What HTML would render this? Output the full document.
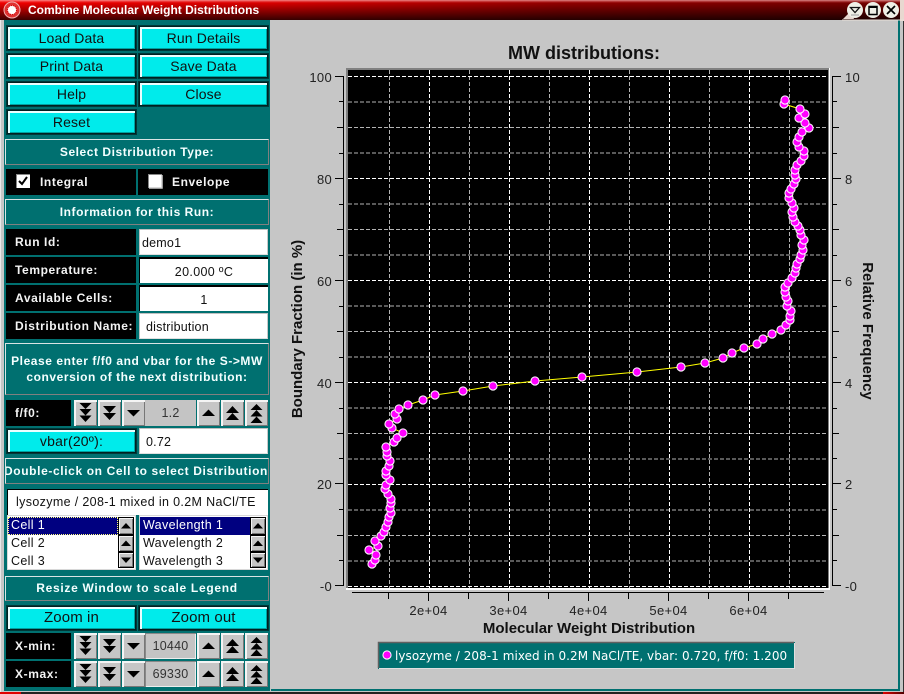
<!DOCTYPE html>
<html><head><meta charset="utf-8"><style>
*{box-sizing:border-box}
html,body{margin:0;padding:0;width:904px;height:694px;overflow:hidden;background:#c6c6c6;font-family:"Liberation Sans",sans-serif}
.a{position:absolute}
.b{position:absolute;width:129px;height:24px;background:#00ebeb;border:1px solid #002020;outline:1px solid #003838;box-shadow:inset 2px 2px 0 #eaffff,inset -1px -1px 0 #00a0a0;font-size:14px;letter-spacing:.12px;color:#111;text-align:center;line-height:22px}
.l{position:absolute;left:5px;width:264px;background:#007070;border:1px solid;border-color:#d8e4e4 #808080 #808080 #d8e4e4;color:#f4ffff;font-weight:bold;font-size:12px;letter-spacing:.55px;text-align:center;white-space:nowrap;overflow:hidden}
.k{position:absolute;background:#000;color:#f4f4f4;font-weight:bold;font-size:12px;letter-spacing:.6px;height:26px;line-height:26px;padding-left:9px;white-space:nowrap}
.w{position:absolute;left:139px;width:129px;height:26px;background:#fff;font-size:12.5px;color:#111;line-height:26px;letter-spacing:.2px;white-space:nowrap}
.w1{border:1px solid #c8c8c8;border-color:#c0c0c0 #c8c8c8 #e0e0e0 #c0c0c0}
.w2{border-top:2px solid #000;border-left:1px solid #000;text-align:center;letter-spacing:.35px}
.s{position:absolute;width:23px;height:26px;background:#c6c6c6;box-shadow:inset 2px 2px 0 #f4f4f4,inset -1px -1px 0 #777}
.s svg{position:absolute;left:0;top:0}
.f{position:absolute;left:145px;width:51px;height:26px;background:#c4c4c4;font-size:12.5px;color:#333;text-align:center;line-height:26px;letter-spacing:.2px}
.f2{box-shadow:inset 1px 1px 0 #888,inset -1px -1px 0 #eee}
.li{position:absolute;width:129px;height:55px;background:#fff;border:1px solid #d8d8d8;font-size:12.5px;color:#111;letter-spacing:.35px}
.li div{position:absolute;left:0;height:18px;line-height:17px;padding-left:3px;white-space:nowrap}
.li .sb{position:absolute;left:110px;width:16px;padding:0;background:#c6c6c6;border:1px solid #000;box-shadow:inset 1px 1px 0 #f4f4f4,inset -1px -1px 0 #777}
.sb svg{position:absolute;left:0;top:0}
</style></head><body>
<svg width="0" height="0" style="position:absolute"><defs>
<symbol id="d1" viewBox="0 0 23 26"><path d="M5 10h13l-6.500 6.500z" fill="#000"/></symbol>
<symbol id="d2" viewBox="0 0 23 26"><path d="M5 6h13l-6.500 7zM5 13h13l-6.500 7z" fill="#000"/></symbol>
<symbol id="d3" viewBox="0 0 23 26"><path d="M5.500 3h12l-6 6zM5.500 9h12l-6 6.500zM5.500 15.500h12l-6 6.500z" fill="#000"/></symbol>
<symbol id="u1" viewBox="0 0 23 26"><path d="M5 16h13l-6.500-6.500z" fill="#000"/></symbol>
<symbol id="u2" viewBox="0 0 23 26"><path d="M5 13h13l-6.500-7zM5 20h13l-6.500-7z" fill="#000"/></symbol>
<symbol id="u3" viewBox="0 0 23 26"><path d="M5.500 10h12l-6-6zM5.500 16.500h12l-6-6.500zM5.500 23h12l-6-6.500z" fill="#000"/></symbol>
</defs></svg>

<!-- outer frame -->
<div class="a" style="left:0;top:0;width:1px;height:694px;background:#e8e8e8"></div>
<div class="a" style="left:898px;top:20px;width:2px;height:671px;background:#007070"></div>
<div class="a" style="left:271px;top:689px;width:629px;height:2px;background:#007070"></div>
<div class="a" style="left:903px;top:20px;width:1px;height:674px;background:#333"></div>
<div class="a" style="left:0;top:692px;width:904px;height:2px;background:#222"></div>
<div class="a" style="left:0;top:692px;width:21px;height:2px;background:#e00000"></div>
<div class="a" style="left:883px;top:692px;width:21px;height:2px;background:linear-gradient(90deg,#e00000,#500000)"></div>

<!-- title bar -->
<div class="a" style="left:0;top:0;width:904px;height:20px;background:linear-gradient(180deg,rgba(255,190,190,.7) 0,rgba(255,120,120,.25) 2px,rgba(0,0,0,0) 3px,rgba(0,0,0,.75) 100%),linear-gradient(90deg,#f00000,#d80000 30%,#900000 62%,#700000)"></div>
<svg class="a" style="left:0;top:0" width="24" height="20"><circle cx="12" cy="10" r="8" fill="#e03030" stroke="#f0b0b0"/><circle cx="12" cy="10" r="4.500" fill="#fff" stroke="#c00" stroke-dasharray="1 1"/></svg>
<div class="a" style="left:28px;top:2px;color:#fff;font-weight:bold;font-size:12px;line-height:16px;white-space:nowrap">Combine Molecular Weight Distributions</div>
<svg class="a" style="left:838px;top:0" width="66" height="21">
<path d="M5 19L13 11L16 19zM62 0h4v21h-4z" fill="#e8d8d0"/>
<path d="M4 20h62" stroke="#e8e0d8" stroke-width="1"/>
<circle cx="17" cy="10" r="8" fill="#efefe6"/><circle cx="35" cy="10" r="8" fill="#efefe6"/><circle cx="53" cy="10" r="8" fill="#efefe6"/>
<path d="M12.500 7.500h9l-4.500 5z" fill="none" stroke="#111" stroke-width="1.300"/><path d="M13 15h8" stroke="#999"/>
<rect x="31" y="6.500" width="8" height="8" fill="none" stroke="#000" stroke-width="1.500"/><path d="M31 7h8" stroke="#000" stroke-width="2"/>
<path d="M49 6l8 8M57 6l-8 8" stroke="#000" stroke-width="1.700"/>
</svg>

<!-- left panel -->
<div class="a" style="left:4px;top:20px;width:266px;height:671px;background:#007070"></div>

<div class="b" style="left:7px;top:26px">Load Data</div>
<div class="b" style="left:139px;top:26px">Run Details</div>
<div class="b" style="left:7px;top:54px">Print Data</div>
<div class="b" style="left:139px;top:54px">Save Data</div>
<div class="b" style="left:7px;top:82px">Help</div>
<div class="b" style="left:139px;top:82px">Close</div>
<div class="b" style="left:7px;top:110px">Reset</div>

<div class="l" style="top:139px;height:26px;line-height:24px">Select Distribution Type:</div>
<div class="k" style="left:6px;top:169px;width:130px"></div>
<div class="k" style="left:138px;top:169px;width:130px"></div>
<div class="a" style="left:40px;top:169px;color:#f4f4f4;font-weight:bold;font-size:12px;letter-spacing:.6px;line-height:26px">Integral</div>
<div class="a" style="left:172px;top:169px;color:#f4f4f4;font-weight:bold;font-size:12px;letter-spacing:.6px;line-height:26px">Envelope</div>
<svg class="a" style="left:16px;top:174px" width="15" height="15"><rect width="14" height="14" fill="#fff"/><path d="M0 14V0h14" fill="none" stroke="#888" stroke-width="2"/><path d="M3 7l3 3 5-7" fill="none" stroke="#000" stroke-width="2"/></svg>
<svg class="a" style="left:148px;top:174px" width="15" height="15"><rect width="14" height="14" fill="#fff"/><path d="M0 14V0h14" fill="none" stroke="#888" stroke-width="2"/><path d="M14 1v13H1" fill="none" stroke="#ccc" stroke-width="1.500"/></svg>

<div class="l" style="top:199px;height:26px;line-height:24px">Information for this Run:</div>
<div class="k" style="left:6px;top:229px;width:130px">Run Id:</div>
<div class="w w1" style="top:229px;padding-left:2px">demo1</div>
<div class="k" style="left:6px;top:257px;width:130px">Temperature:</div>
<div class="w w2" style="top:257px">20.000 ºC</div>
<div class="k" style="left:6px;top:285px;width:130px">Available Cells:</div>
<div class="w w2" style="top:285px">1</div>
<div class="k" style="left:6px;top:313px;width:130px">Distribution Name:</div>
<div class="w w1" style="top:313px;padding-left:6px">distribution</div>

<div class="l" style="top:343px;height:52px;line-height:16px;padding-top:9px">Please enter f/f0 and vbar for the S-&gt;MW<br>conversion of the next distribution:</div>

<div class="k" style="left:6px;top:400px;width:65px">f/f0:</div>
<div class="s" style="left:74px;top:400px"><svg width="23" height="26"><use href="#d3"/></svg></div>
<div class="s" style="left:98px;top:400px"><svg width="23" height="26"><use href="#d2"/></svg></div>
<div class="s" style="left:122px;top:400px"><svg width="23" height="26"><use href="#d1"/></svg></div>
<div class="f" style="top:400px">1.2</div>
<div class="s" style="left:197px;top:400px"><svg width="23" height="26"><use href="#u1"/></svg></div>
<div class="s" style="left:221px;top:400px"><svg width="23" height="26"><use href="#u2"/></svg></div>
<div class="s" style="left:245px;top:400px"><svg width="23" height="26"><use href="#u3"/></svg></div>

<div class="b" style="left:7px;top:429px;letter-spacing:.2px">vbar(20º):</div>
<div class="w w1" style="top:428px;padding-left:6px">0.72</div>

<div class="l" style="top:458px;height:26px;line-height:24px;text-indent:-1px"><span style="display:inline-block;margin:0 -10px;letter-spacing:.62px">Double-click on Cell to select Distribution</span></div>

<div class="a" style="left:7px;top:489px;width:261px;height:26px;background:#fff;border-top:1px solid #000;border-left:1px solid #000;font-size:12.5px;color:#111;line-height:25px;padding-left:8px;letter-spacing:.35px;white-space:nowrap">lysozyme / 208-1 mixed in 0.2M NaCl/TE</div>

<div class="li" style="left:7px;top:515px">
<div style="top:1px;width:110px;background:#000080;color:#fff;outline:1px dotted #ffff80;outline-offset:-1px">Cell 1</div>
<div style="top:19px">Cell 2</div><div style="top:37px">Cell 3</div>
<div class="sb" style="top:1px;height:18px"><svg width="14" height="16" viewBox="0 0 14 16"><path d="M2 10.500h10l-5-5.500z" fill="#000"/></svg></div>
<div class="sb" style="top:19px;height:17px"><svg width="14" height="15" viewBox="0 0 14 15"><path d="M2 10h10l-5-5.500z" fill="#000"/></svg></div>
<div class="sb" style="top:36px;height:16px"><svg width="14" height="14" viewBox="0 0 14 14"><path d="M2 4.500h10l-5 5.500z" fill="#000"/></svg></div>
</div>
<div class="li" style="left:139px;top:515px">
<div style="top:1px;width:110px;background:#000080;color:#fff">Wavelength 1</div>
<div style="top:19px">Wavelength 2</div><div style="top:37px">Wavelength 3</div>
<div class="sb" style="top:1px;height:18px"><svg width="14" height="16" viewBox="0 0 14 16"><path d="M2 10.500h10l-5-5.500z" fill="#000"/></svg></div>
<div class="sb" style="top:19px;height:17px"><svg width="14" height="15" viewBox="0 0 14 15"><path d="M2 10h10l-5-5.500z" fill="#000"/></svg></div>
<div class="sb" style="top:36px;height:16px"><svg width="14" height="14" viewBox="0 0 14 14"><path d="M2 4.500h10l-5 5.500z" fill="#000"/></svg></div>
</div>

<div class="l" style="top:576px;height:25px;line-height:23px;letter-spacing:.7px">Resize Window to scale Legend</div>

<div class="b" style="left:7px;top:606px;font-size:15px;letter-spacing:.1px">Zoom in</div>
<div class="b" style="left:139px;top:606px;font-size:15px;letter-spacing:.1px">Zoom out</div>

<div class="k" style="left:6px;top:633px;width:65px;height:26px">X-min:</div>
<div class="s" style="left:74px;top:633px"><svg width="23" height="26"><use href="#d3"/></svg></div>
<div class="s" style="left:98px;top:633px"><svg width="23" height="26"><use href="#d2"/></svg></div>
<div class="s" style="left:122px;top:633px"><svg width="23" height="26"><use href="#d1"/></svg></div>
<div class="f f2" style="top:633px">10440</div>
<div class="s" style="left:197px;top:633px"><svg width="23" height="26"><use href="#u1"/></svg></div>
<div class="s" style="left:221px;top:633px"><svg width="23" height="26"><use href="#u2"/></svg></div>
<div class="s" style="left:245px;top:633px"><svg width="23" height="26"><use href="#u3"/></svg></div>

<div class="k" style="left:6px;top:661px;width:65px;height:26px">X-max:</div>
<div class="s" style="left:74px;top:661px"><svg width="23" height="26"><use href="#d3"/></svg></div>
<div class="s" style="left:98px;top:661px"><svg width="23" height="26"><use href="#d2"/></svg></div>
<div class="s" style="left:122px;top:661px"><svg width="23" height="26"><use href="#d1"/></svg></div>
<div class="f f2" style="top:661px">69330</div>
<div class="s" style="left:197px;top:661px"><svg width="23" height="26"><use href="#u1"/></svg></div>
<div class="s" style="left:221px;top:661px"><svg width="23" height="26"><use href="#u2"/></svg></div>
<div class="s" style="left:245px;top:661px"><svg width="23" height="26"><use href="#u3"/></svg></div>

<!-- plot -->
<svg class="a" style="left:0;top:0" width="904" height="694" font-family="'Liberation Sans',sans-serif">
<rect x="346" y="68" width="484" height="522" fill="#fff"/>
<rect x="346" y="68" width="483" height="520" fill="#808080"/>
<rect x="348" y="70" width="480" height="518" fill="#000"/>
<g fill="none" stroke-dasharray="4 2" stroke="#b4b4b4">
<path d="M348 102h480M348 127.500h480M348 153h480M348 204h480M348 229.500h480M348 255h480M348 306h480M348 331.500h480M348 357h480M348 408h480M348 433.500h480M348 459h480M348 510h480M348 535.500h480M348 561h480"/>
<path d="M389.500 70v518M469.500 70v518M549.500 70v518M629.500 70v518M709.500 70v518M789.500 70v518"/>
<g stroke="#fff"><path d="M348 76.500h480M348 178.500h480M348 280.500h480M348 382.500h480M348 484.500h480M348 586.500h480"/>
<path d="M429.500 70v518M509.500 70v518M589.500 70v518M669.500 70v518M749.500 70v518"/></g>
</g>
<polyline fill="none" stroke="#ffff00" points="372,564 375,560 376,555 369,550 378,546 375,541 381,536 384,532 386,527 388,522 389,517 391,513 390,508 391,503 391,499 388,494 385,489 386,485 390,480 386,475 386,471 389,466 390,461 387,456 387,452 386,447 394,442 397,438 403,433 392,428 389,424 397,419 395,414 399,409 408,405 423,400 435,395 463,391 493,386 535,381 582,377 637,372 681,367 705,363 723,358 732,353 744,348 757,344 763,339 772,334 781,330 786,325 790,320 790,316 791,311 787,306 788,301 786,297 785,292 785,287 788,283 792,278 795,273 796,268 797,264 800,259 801,255 803,250 802,245 804,240 801,235 800,230 798,226 795,222 793,217 792,212 794,208 792,203 789,198 789,193 791,189 794,184 796,179 795,175 795,170 797,165 801,161 804,156 804,151 799,147 797,142 799,137 802,132 809,128 805,123 799,118 805,114 800,109 784,104 785,100"/>
<g fill="#ff00ff" stroke="#fff">
<circle cx="372" cy="564" r="4.100"/><circle cx="375" cy="560" r="4.100"/><circle cx="376" cy="555" r="4.100"/><circle cx="369" cy="550" r="4.100"/><circle cx="378" cy="546" r="4.100"/><circle cx="375" cy="541" r="4.100"/><circle cx="381" cy="536" r="4.100"/><circle cx="384" cy="532" r="4.100"/><circle cx="386" cy="527" r="4.100"/><circle cx="388" cy="522" r="4.100"/><circle cx="389" cy="517" r="4.100"/><circle cx="391" cy="513" r="4.100"/><circle cx="390" cy="508" r="4.100"/><circle cx="391" cy="503" r="4.100"/><circle cx="391" cy="499" r="4.100"/><circle cx="388" cy="494" r="4.100"/><circle cx="385" cy="489" r="4.100"/><circle cx="386" cy="485" r="4.100"/><circle cx="390" cy="480" r="4.100"/><circle cx="386" cy="475" r="4.100"/><circle cx="386" cy="471" r="4.100"/><circle cx="389" cy="466" r="4.100"/><circle cx="390" cy="461" r="4.100"/><circle cx="387" cy="456" r="4.100"/><circle cx="387" cy="452" r="4.100"/><circle cx="386" cy="447" r="4.100"/><circle cx="394" cy="442" r="4.100"/><circle cx="397" cy="438" r="4.100"/><circle cx="403" cy="433" r="4.100"/><circle cx="392" cy="428" r="4.100"/><circle cx="389" cy="424" r="4.100"/><circle cx="397" cy="419" r="4.100"/><circle cx="395" cy="414" r="4.100"/><circle cx="399" cy="409" r="4.100"/><circle cx="408" cy="405" r="4.100"/><circle cx="423" cy="400" r="4.100"/><circle cx="435" cy="395" r="4.100"/><circle cx="463" cy="391" r="4.100"/><circle cx="493" cy="386" r="4.100"/><circle cx="535" cy="381" r="4.100"/><circle cx="582" cy="377" r="4.100"/><circle cx="637" cy="372" r="4.100"/><circle cx="681" cy="367" r="4.100"/><circle cx="705" cy="363" r="4.100"/><circle cx="723" cy="358" r="4.100"/><circle cx="732" cy="353" r="4.100"/><circle cx="744" cy="348" r="4.100"/><circle cx="757" cy="344" r="4.100"/><circle cx="763" cy="339" r="4.100"/><circle cx="772" cy="334" r="4.100"/><circle cx="781" cy="330" r="4.100"/><circle cx="786" cy="325" r="4.100"/><circle cx="790" cy="320" r="4.100"/><circle cx="790" cy="316" r="4.100"/><circle cx="791" cy="311" r="4.100"/><circle cx="787" cy="306" r="4.100"/><circle cx="788" cy="301" r="4.100"/><circle cx="786" cy="297" r="4.100"/><circle cx="785" cy="292" r="4.100"/><circle cx="785" cy="287" r="4.100"/><circle cx="788" cy="283" r="4.100"/><circle cx="792" cy="278" r="4.100"/><circle cx="795" cy="273" r="4.100"/><circle cx="796" cy="268" r="4.100"/><circle cx="797" cy="264" r="4.100"/><circle cx="800" cy="259" r="4.100"/><circle cx="801" cy="255" r="4.100"/><circle cx="803" cy="250" r="4.100"/><circle cx="802" cy="245" r="4.100"/><circle cx="804" cy="240" r="4.100"/><circle cx="801" cy="235" r="4.100"/><circle cx="800" cy="230" r="4.100"/><circle cx="798" cy="226" r="4.100"/><circle cx="795" cy="222" r="4.100"/><circle cx="793" cy="217" r="4.100"/><circle cx="792" cy="212" r="4.100"/><circle cx="794" cy="208" r="4.100"/><circle cx="792" cy="203" r="4.100"/><circle cx="789" cy="198" r="4.100"/><circle cx="789" cy="193" r="4.100"/><circle cx="791" cy="189" r="4.100"/><circle cx="794" cy="184" r="4.100"/><circle cx="796" cy="179" r="4.100"/><circle cx="795" cy="175" r="4.100"/><circle cx="795" cy="170" r="4.100"/><circle cx="797" cy="165" r="4.100"/><circle cx="801" cy="161" r="4.100"/><circle cx="804" cy="156" r="4.100"/><circle cx="804" cy="151" r="4.100"/><circle cx="799" cy="147" r="4.100"/><circle cx="797" cy="142" r="4.100"/><circle cx="799" cy="137" r="4.100"/><circle cx="802" cy="132" r="4.100"/><circle cx="809" cy="128" r="4.100"/><circle cx="805" cy="123" r="4.100"/><circle cx="799" cy="118" r="4.100"/><circle cx="805" cy="114" r="4.100"/><circle cx="800" cy="109" r="4.100"/><circle cx="784" cy="104" r="4.100"/><circle cx="785" cy="100" r="4.100"/>
</g>

<!-- axes -->
<g stroke="#000" fill="none">
<path d="M343.500 76v509.500M335 76.500h9M335 178.500h9M335 280.500h9M335 382.500h9M335 483.500h9M335 585.500h9"/>
<path d="M339 101.500h5M337 127.500h7M339 153.500h5M339 204.500h5M337 229.500h7M339 255.500h5M339 306.500h5M337 331.500h7M339 357.500h5M339 408.500h5M337 433.500h7M339 458.500h5M339 509.500h5M337 535.500h7M339 560.500h5"/>
<path d="M832.500 76v509.500M832 76.500h9M832 178.500h9M832 280.500h9M832 382.500h9M832 483.500h9M832 585.500h9"/>
<path d="M832 101.500h5M832 127.500h7M832 153.500h5M832 204.500h5M832 229.500h7M832 255.500h5M832 306.500h5M832 331.500h7M832 357.500h5M832 408.500h5M832 433.500h7M832 458.500h5M832 509.500h5M832 535.500h7M832 560.500h5"/>
<path d="M352 592.500h472M388.500 592v7M428.500 592v9M468.500 592v7M508.500 592v9M548.500 592v7M588.500 592v9M628.500 592v7M668.500 592v9M708.500 592v7M748.500 592v9M788.500 592v7"/>
</g>
<g font-size="13" fill="#222" letter-spacing=".3" text-anchor="end">
<text x="332" y="82">100</text><text x="332" y="184">80</text><text x="332" y="286">60</text><text x="332" y="388">40</text><text x="332" y="489">20</text><text x="332" y="591">-0</text>
</g>
<g font-size="13" fill="#222" letter-spacing=".3">
<text x="845" y="82">10</text><text x="845" y="184">8</text><text x="845" y="286">6</text><text x="845" y="388">4</text><text x="845" y="489">2</text><text x="845" y="591">-0</text>
</g>
<g font-size="13" fill="#222" letter-spacing=".35" text-anchor="middle">
<text x="428.500" y="615">2e+04</text><text x="508.500" y="615">3e+04</text><text x="588.500" y="615">4e+04</text><text x="668.500" y="615">5e+04</text><text x="748.500" y="615">6e+04</text>
</g>
<text x="584" y="59" font-size="18" font-weight="bold" fill="#111" text-anchor="middle">MW distributions:</text>
<text x="589" y="633" font-size="15" font-weight="bold" fill="#111" text-anchor="middle">Molecular Weight Distribution</text>
<text transform="translate(302 329) rotate(-90)" font-size="15" font-weight="bold" fill="#111" text-anchor="middle">Boundary Fraction (in %)</text>
<text transform="translate(863 331) rotate(90)" font-size="15" font-weight="bold" fill="#111" text-anchor="middle">Relative Frequency</text>

<!-- legend -->
<rect x="378" y="642" width="417" height="27" fill="#007070"/>
<path d="M378.500 668V642.500H794" fill="none" stroke="#606060" stroke-width="1.500"/>
<path d="M379 668.500h415.500V643" fill="none" stroke="#e0e0e0"/>
<circle cx="387" cy="655" r="4.100" fill="#ff00ff" stroke="#fff"/>
<text x="395" y="660" font-family="'DejaVu Sans',sans-serif" font-size="12" letter-spacing=".05" fill="#fff">lysozyme / 208-1 mixed in 0.2M NaCl/TE, vbar: 0.720, f/f0: 1.200</text>
</svg>
</body></html>
